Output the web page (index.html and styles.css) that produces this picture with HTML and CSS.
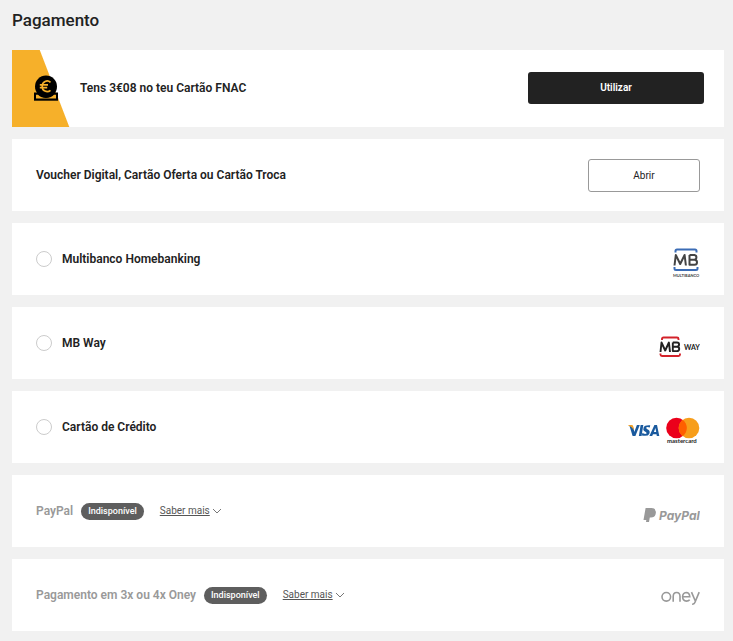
FILE: index.html
```
<!DOCTYPE html>
<html lang="pt">
<head>
    <meta charset="UTF-8">
    <meta name="viewport" content="width=device-width, initial-scale=1.0">
    <title>Pagamento</title>
    <link rel="stylesheet" href="styles.css">
</head>
<body>
    <main>
        <h1>Pagamento</h1>
        <div class="payment-list">
            <section class="card balance">
                <div class="balance-flag">
                    <svg width="26" height="26" viewBox="0 0 26 26" aria-hidden="true">
                        <path d="M1 17.500H25V25.700H1Z" fill="#000"/>
                        <path d="M3 19.700H5Q8.500 23 13 23T21 19.700H23V23.500H3Z" fill="#f6b02a"/>
                        <circle cx="13" cy="11.500" r="11" fill="#000"/>
                        <path d="M17.500 7.300A5 5 0 0 0 9.200 11.200A5 5 0 0 0 17.500 15.300M6.800 9.900H15M6.800 12.700H14.200" fill="none" stroke="#f6b02a" stroke-width="1.700"/>
                    </svg>
                </div>
                <h2>Tens 3€08 no teu Cartão FNAC</h2>
                <button type="button" class="btn btn-dark">Utilizar</button>
            </section>

            <section class="card">
                <h2>Voucher Digital, Cartão Oferta ou Cartão Troca</h2>
                <button type="button" class="btn btn-light">Abrir</button>
            </section>

            <section class="card">
                <label class="option"><input type="radio" name="payment" value="multibanco">Multibanco Homebanking</label>
                <svg class="logo" width="28" height="32" viewBox="0 0 28 32" role="img" aria-label="Multibanco">
                    <path d="M3.500 5.500V4Q3.500 2.500 5 2.500H23Q24.500 2.500 24.500 4V5.500M2.500 20V21.500Q2.500 23 4 23H24Q25.500 23 25.500 21.500V20" fill="none" stroke="#3b6cb5" stroke-width="2"/>
                    <path d="M2.500 18.500L3.800 8L8.200 17L12.600 8L13.900 18.500M17.500 8H22.500A2.400 2.400 0 0 1 22.500 12.700H17.500M22.500 12.700A2.500 2.500 0 0 1 22.500 17.700H17.500V8" fill="none" stroke="#444" stroke-width="2" stroke-linejoin="round"/>
                    <text class="logo-tiny" x="1" y="30">MULTIBANCO</text>
                </svg>
            </section>

            <section class="card">
                <label class="option"><input type="radio" name="payment" value="mbway">MB Way</label>
                <svg class="logo" width="42" height="22" viewBox="0 0 42 22" role="img" aria-label="MB Way">
                    <path d="M4 4V3Q4 1.500 5.500 1.500H19Q20.500 1.500 20.500 3V4M2.500 17.500V18.500Q2.500 20 4 20H20.500Q22 20 22 18.500V17.500" fill="none" stroke="#d3222a" stroke-width="1.900"/>
                    <path d="M2.500 16L3.500 6.500L7.200 14.500L10.900 6.500L12 16M14.800 6.500H19A2.100 2.100 0 0 1 19 10.700H14.800M19 10.700A2.200 2.200 0 0 1 19 15.100H14.800V6.500" fill="none" stroke="#222" stroke-width="1.900" stroke-linejoin="round"/>
                    <text class="logo-way" x="26" y="14">WAY</text>
                </svg>
            </section>

            <section class="card">
                <label class="option"><input type="radio" name="payment" value="card">Cartão de Crédito</label>
                <svg class="logo" width="72" height="28" viewBox="0 0 72 28" role="img" aria-label="Visa, Mastercard">
                    <g fill="#1a5a9e">
                        <path d="M1.200 8L4.600 19H7.400L11.800 8H8.900L6.300 15.100L5.500 10.700Z"/>
                        <path d="M12.600 8H15.300L13.600 19H10.900Z"/>
                        <path d="M22.200 8.300L21.800 10.600Q20 9.800 18.700 10.200T18.900 11.900L20.300 12.700Q22.500 14.100 21.200 16.900T13.900 18.500L14.300 16.100Q16.300 17.200 17.900 16.800T17.800 15L16.500 14.300Q14.600 13.100 15.600 10.500T22.200 8.300Z"/>
                        <path d="M26.400 8H29L31.300 19H28.800L28.500 17.300H25L24.200 19H21.400ZM27.400 11L25.900 15.100H28.200Z" fill-rule="evenodd"/>
                    </g>
                    <path d="M0 8H3.800Q4.900 8 5.200 9.200L6 13Q3.500 9.300 0 8.300Z" fill="#f2a025"/>
                    <circle cx="48.500" cy="11" r="10.300" fill="#eb001b"/>
                    <circle cx="61" cy="11" r="10.300" fill="#f79e1b"/>
                    <path d="M54.750 2.800A10.300 10.300 0 0 1 54.750 19.200A10.300 10.300 0 0 1 54.750 2.800Z" fill="#ff5f00"/>
                    <text class="logo-mastercard" x="39" y="26">mastercard</text>
                </svg>
            </section>

            <section class="card unavailable">
                <h2>PayPal</h2>
                <span class="badge">Indisponível</span>
                <a class="more" href="#paypal"><span>Saber mais</span><svg width="10" height="6" viewBox="0 0 10 6" aria-hidden="true"><path d="M1 1L5 5L9 1" fill="none" stroke="#777"/></svg></a>
                <svg class="logo" width="57" height="18" viewBox="0 0 57 18" role="img" aria-label="PayPal">
                    <path d="M2.600 2H8.500Q12 2 12.200 4.300Q13.500 5.700 12.600 8.300Q11.700 11.500 8 11.500H6.800L6 16H3L3.300 14H0.500Z" fill="#999"/>
                    <text class="logo-paypal" x="16" y="14">PayPal</text>
                </svg>
            </section>

            <section class="card unavailable">
                <h2>Pagamento em 3x ou 4x Oney</h2>
                <span class="badge">Indisponível</span>
                <a class="more" href="#oney"><span>Saber mais</span><svg width="10" height="6" viewBox="0 0 10 6" aria-hidden="true"><path d="M1 1L5 5L9 1" fill="none" stroke="#777"/></svg></a>
                <svg class="logo" width="40" height="18" viewBox="0 0 40 18" role="img" aria-label="Oney">
                    <g fill="none" stroke="#999" stroke-width="1.600">
                        <circle cx="6.300" cy="6.800" r="4.300"/>
                        <path d="M13.200 11.800V6.500Q13.200 2.500 16.600 2.500T20 6.500V11.800M22.700 6.800H29.800Q29.500 2.500 26.200 2.500Q22.700 2.700 22.600 6.800Q22.700 11 26.500 11.100Q28.500 11.100 29.700 9.700M31.500 2.100L35.200 10.800M39.200 2.100L35 12.300Q34.200 14.500 32.200 14.100"/>
                    </g>
                </svg>
            </section>
        </div>
    </main>
</body>
</html>
```

FILE: styles.css
```
* {
    margin: 0;
    padding: 0;
    box-sizing: border-box;
}

body {
    font-family: Roboto, 'Liberation Sans', sans-serif;
    background-color: #f1f1f1;
    color: #222;
    font-size: 12px;
    line-height: 16px;
}

main {
    padding: 8px 9px 10px 12px;
}

h1 {
    font-size: 17px;
    font-weight: 500;
    line-height: 24px;
    margin-bottom: 18px;
}

h2 {
    font-size: 12px;
    font-weight: 600;
    line-height: 16px;
}

.payment-list {
    display: flex;
    flex-direction: column;
    gap: 12px;
}

.card {
    display: flex;
    align-items: center;
    min-height: 72px;
    padding: 0 24px;
    background: #fff;
}

/* FNAC card balance */
.balance {
    min-height: 77px;
    padding: 0 20px 2px 0;
    background: linear-gradient(69deg, #f6b02a 53px, #fff 54px);
}

.balance-flag {
    display: flex;
    width: 58px;
    margin-right: 10px;
    padding-left: 21px;
}

/* Buttons */
.btn {
    height: 32px;
    margin-left: auto;
    border-radius: 3px;
    font-family: inherit;
    font-size: 10px;
    cursor: pointer;
}

.btn-dark {
    width: 176px;
    border: none;
    background: #222;
    color: #fff;
    font-weight: 600;
}

.btn-light {
    width: 112px;
    height: 33px;
    border: 1px solid #999;
    background: #fff;
    color: #222;
}

/* Payment options */
.option {
    display: flex;
    align-items: center;
    gap: 10px;
    font-weight: 600;
    cursor: pointer;
}

.option input {
    appearance: none;
    width: 16px;
    height: 16px;
    border: 1px solid #ccc;
    border-radius: 50%;
    background: #fff;
}

.option input:checked {
    border: 5px solid #222;
}

.unavailable h2 {
    color: #999;
}

.badge {
    margin-left: 8px;
    padding: 0 7px;
    border-radius: 9px;
    background: #5e5e5e;
    color: #fff;
    font-size: 9px;
    font-weight: 500;
    line-height: 17px;
}

.more {
    display: flex;
    align-items: center;
    gap: 2px;
    margin-left: 16px;
    color: #555;
    font-size: 10px;
    text-decoration: none;
}

.more span {
    text-decoration: underline;
}

/* Logos */
.logo {
    margin-top: 8px;
    margin-left: auto;
    font-family: Lato, 'Liberation Sans', sans-serif;
}

.logo-tiny {
    font-size: 4px;
    font-weight: 700;
    fill: #444;
}

.logo-way {
    font-size: 7px;
    font-weight: 700;
    fill: #222;
}

.logo-mastercard {
    font-size: 6px;
    font-weight: 700;
    fill: #222;
}

.logo-paypal {
    font-family: Inter, 'Liberation Sans', sans-serif;
    font-size: 12px;
    font-style: italic;
    font-weight: 700;
    fill: #999;
}
```
